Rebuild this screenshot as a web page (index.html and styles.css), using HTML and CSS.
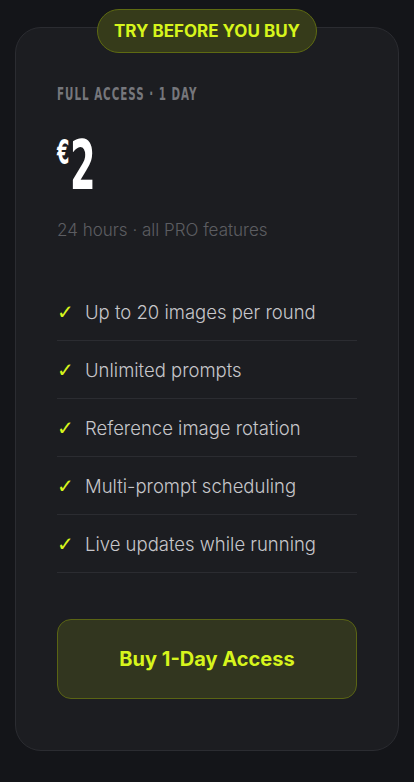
FILE: index.html
```html
<!DOCTYPE html>
<html lang="en">
<head>
    <meta charset="UTF-8">
    <meta name="viewport" content="width=device-width, initial-scale=1.0">
    <title>1-Day Access</title>
    <link rel="stylesheet" href="styles.css">
</head>
<body>

    <!-- Pricing card -->
    <div class="card">
        <div class="badge">TRY BEFORE YOU BUY</div>

        <div class="plan-label"><span>FULL ACCESS · 1 DAY</span></div>
        <div class="price">
            <span class="currency">€</span><span class="amount">2</span>
        </div>
        <div class="plan-sub">24 hours · all PRO features</div>

        <ul class="features">
            <li><span class="check">✓</span>Up to 20 images per round</li>
            <li><span class="check">✓</span>Unlimited prompts</li>
            <li><span class="check">✓</span>Reference image rotation</li>
            <li><span class="check">✓</span>Multi-prompt scheduling</li>
            <li><span class="check">✓</span>Live updates while running</li>
        </ul>

        <button class="buy-button">Buy 1-Day Access</button>
    </div>

</body>
</html>
```

FILE: styles.css
```css
body {
    font-family: Inter, "Noto Sans", sans-serif;
    background-color: #141519;
    color: #c9c9cd;
    margin: 0;
    padding: 27px 15px 0;
    height: 782px;
    box-sizing: border-box;
}

.card {
    position: relative;
    background-color: #1c1d21;
    border: 1px solid #2b2c31;
    border-radius: 26px;
    padding: 56px 41px 52px;
    height: 724px;
    box-sizing: border-box;
}

/* pill sitting on the top border */
.badge {
    position: absolute;
    top: -19px;
    left: 50%;
    transform: translateX(-50%);
    width: 220px;
    height: 44px;
    box-sizing: border-box;
    display: flex;
    justify-content: center;
    align-items: center;
    background-color: #363b1a;
    border: 1px solid #5e6a12;
    border-radius: 22px;
    color: #d7f51c;
    font-weight: 700;
    font-size: 17px;
}

/* condensed caps, squeezed a little */
.plan-label {
    font-family: "DejaVu Sans Condensed", "DejaVu Sans", sans-serif;
    font-weight: bold;
    font-size: 18.5px;
    line-height: 20px;
    color: #76777c;
    white-space: nowrap;
}

.plan-label span {
    display: inline-block;
    letter-spacing: 1.6px;
    transform: scaleX(0.62);
    transform-origin: left top;
}

.price {
    margin-top: 35px;
    height: 54px;
    display: flex;
    align-items: flex-start;
    color: #ffffff;
    font-family: "DejaVu Sans Condensed", "DejaVu Sans", sans-serif;
    font-weight: bold;
}

.currency {
    font-size: 34px;
    line-height: 34px;
    display: inline-block;
    transform: scaleX(0.58);
    transform-origin: left top;
    margin-top: -4px;
    width: 13px;
}

.amount {
    font-size: 68px;
    line-height: 54px;
    display: inline-block;
    transform: scaleX(0.6);
    transform-origin: left top;
}

.plan-sub {
    margin-top: 27px;
    font-size: 17px;
    font-weight: 300;
    color: #5c5d62;
}

.features {
    list-style: none;
    margin: 43px 0 0;
    padding: 0;
}

.features li {
    display: flex;
    align-items: center;
    height: 57px;
    border-bottom: 1px solid #2b2c31;
    font-size: 18.5px;
    font-weight: 300;
    color: #c6c6ca;
}

.check {
    color: #d7f51c;
    font-family: "DejaVu Sans", sans-serif;
    font-weight: bold;
    font-size: 20px;
    width: 28px;
}

.buy-button {
    margin-top: 46px;
    width: 100%;
    height: 80px;
    background-color: #32361f;
    border: 1px solid #5a6414;
    border-radius: 14px;
    color: #d7f51c;
    font-family: Inter, "Noto Sans", sans-serif;
    font-weight: 700;
    font-size: 20px;
    cursor: pointer;
}
```
